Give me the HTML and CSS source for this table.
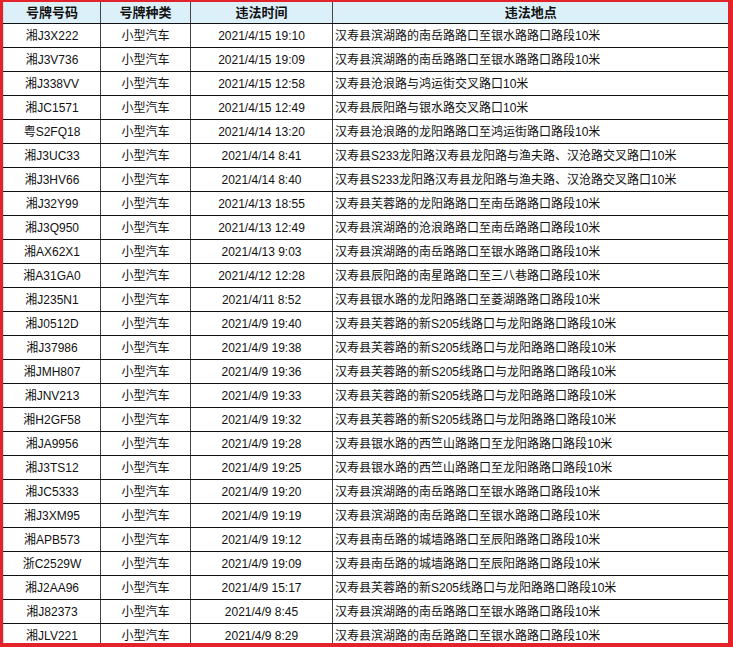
FILE: index.html
```html
<!DOCTYPE html>
<html lang="zh-CN">
<head>
<meta charset="utf-8">
<title>违法记录</title>
<link rel="stylesheet" href="styles.css">
</head>
<body>
<div class="sheet">
<table class="grid">
<colgroup><col class="c1"><col class="c2"><col class="c3"><col class="c4"></colgroup>
<thead>
<tr><th>号牌号码</th><th>号牌种类</th><th>违法时间</th><th class="loc-h">违法地点</th></tr>
</thead>
<tbody>
<tr><td>湘J3X222</td><td>小型汽车</td><td>2021/4/15 19:10</td><td class="loc">汉寿县滨湖路的南岳路路口至银水路路口路段10米</td></tr>
<tr><td>湘J3V736</td><td>小型汽车</td><td>2021/4/15 19:09</td><td class="loc">汉寿县滨湖路的南岳路路口至银水路路口路段10米</td></tr>
<tr><td>湘J338VV</td><td>小型汽车</td><td>2021/4/15 12:58</td><td class="loc">汉寿县沧浪路与鸿运街交叉路口10米</td></tr>
<tr><td>湘JC1571</td><td>小型汽车</td><td>2021/4/15 12:49</td><td class="loc">汉寿县辰阳路与银水路交叉路口10米</td></tr>
<tr><td>粤S2FQ18</td><td>小型汽车</td><td>2021/4/14 13:20</td><td class="loc">汉寿县沧浪路的龙阳路路口至鸿运街路口路段10米</td></tr>
<tr><td>湘J3UC33</td><td>小型汽车</td><td>2021/4/14 8:41</td><td class="loc">汉寿县S233龙阳路汉寿县龙阳路与渔夫路、汉沧路交叉路口10米</td></tr>
<tr><td>湘J3HV66</td><td>小型汽车</td><td>2021/4/14 8:40</td><td class="loc">汉寿县S233龙阳路汉寿县龙阳路与渔夫路、汉沧路交叉路口10米</td></tr>
<tr><td>湘J32Y99</td><td>小型汽车</td><td>2021/4/13 18:55</td><td class="loc">汉寿县芙蓉路的龙阳路路口至南岳路路口路段10米</td></tr>
<tr><td>湘J3Q950</td><td>小型汽车</td><td>2021/4/13 12:49</td><td class="loc">汉寿县滨湖路的沧浪路路口至南岳路路口路段10米</td></tr>
<tr><td>湘AX62X1</td><td>小型汽车</td><td>2021/4/13 9:03</td><td class="loc">汉寿县滨湖路的南岳路路口至银水路路口路段10米</td></tr>
<tr><td>湘A31GA0</td><td>小型汽车</td><td>2021/4/12 12:28</td><td class="loc">汉寿县辰阳路的南星路路口至三八巷路口路段10米</td></tr>
<tr><td>湘J235N1</td><td>小型汽车</td><td>2021/4/11 8:52</td><td class="loc">汉寿县银水路的龙阳路路口至菱湖路路口路段10米</td></tr>
<tr><td>湘J0512D</td><td>小型汽车</td><td>2021/4/9 19:40</td><td class="loc">汉寿县芙蓉路的新S205线路口与龙阳路路口路段10米</td></tr>
<tr><td>湘J37986</td><td>小型汽车</td><td>2021/4/9 19:38</td><td class="loc">汉寿县芙蓉路的新S205线路口与龙阳路路口路段10米</td></tr>
<tr><td>湘JMH807</td><td>小型汽车</td><td>2021/4/9 19:36</td><td class="loc">汉寿县芙蓉路的新S205线路口与龙阳路路口路段10米</td></tr>
<tr><td>湘JNV213</td><td>小型汽车</td><td>2021/4/9 19:33</td><td class="loc">汉寿县芙蓉路的新S205线路口与龙阳路路口路段10米</td></tr>
<tr><td>湘H2GF58</td><td>小型汽车</td><td>2021/4/9 19:32</td><td class="loc">汉寿县芙蓉路的新S205线路口与龙阳路路口路段10米</td></tr>
<tr><td>湘JA9956</td><td>小型汽车</td><td>2021/4/9 19:28</td><td class="loc">汉寿县银水路的西竺山路路口至龙阳路路口路段10米</td></tr>
<tr><td>湘J3TS12</td><td>小型汽车</td><td>2021/4/9 19:25</td><td class="loc">汉寿县银水路的西竺山路路口至龙阳路路口路段10米</td></tr>
<tr><td>湘JC5333</td><td>小型汽车</td><td>2021/4/9 19:20</td><td class="loc">汉寿县滨湖路的南岳路路口至银水路路口路段10米</td></tr>
<tr><td>湘J3XM95</td><td>小型汽车</td><td>2021/4/9 19:19</td><td class="loc">汉寿县滨湖路的南岳路路口至银水路路口路段10米</td></tr>
<tr><td>湘APB573</td><td>小型汽车</td><td>2021/4/9 19:12</td><td class="loc">汉寿县南岳路的城墙路路口至辰阳路路口路段10米</td></tr>
<tr><td>浙C2529W</td><td>小型汽车</td><td>2021/4/9 19:09</td><td class="loc">汉寿县南岳路的城墙路路口至辰阳路路口路段10米</td></tr>
<tr><td>湘J2AA96</td><td>小型汽车</td><td>2021/4/9 15:17</td><td class="loc">汉寿县芙蓉路的新S205线路口与龙阳路路口路段10米</td></tr>
<tr><td>湘J82373</td><td>小型汽车</td><td>2021/4/9 8:45</td><td class="loc">汉寿县滨湖路的南岳路路口至银水路路口路段10米</td></tr>
<tr><td>湘JLV221</td><td>小型汽车</td><td>2021/4/9 8:29</td><td class="loc">汉寿县滨湖路的南岳路路口至银水路路口路段10米</td></tr>
</tbody>
</table>
</div>
</body>
</html>
```

FILE: styles.css
```css
html, body {
  margin: 0;
  padding: 0;
}
body {
  width: 733px;
  height: 647px;
  overflow: hidden;
  background: #e3222a;
  font-family: "Liberation Sans", Arial, "Noto Sans CJK SC", sans-serif;
  color: #111;
}
.sheet {
  margin: 2px 5px 0 3px;
  height: 641px;
  overflow: hidden;
  background: #fff;
}
.grid {
  width: 725px;
  border-collapse: collapse;
  table-layout: fixed;
}
.c1 { width: 97px; }
.c2 { width: 90px; }
.c3 { width: 142px; }
.c4 { width: 396px; }
.grid th,
.grid td {
  padding: 0;
  border-left: 1px solid #444;
  border-bottom: 1px solid #111;
  text-align: center;
  white-space: nowrap;
  overflow: hidden;
}
.grid th:first-child,
.grid td:first-child {
  border-left: 1px solid #ddd;
}
.grid th {
  height: 21px;
  background: #dcf0f9;
  font-size: 13px;
  font-weight: bold;
  line-height: 20px;
}
.grid td {
  height: 22px;
  font-size: 12px;
  line-height: 22px;
  padding-top: 1px;
}
.grid td.loc {
  text-align: left;
  padding-left: 2px;
}
```
